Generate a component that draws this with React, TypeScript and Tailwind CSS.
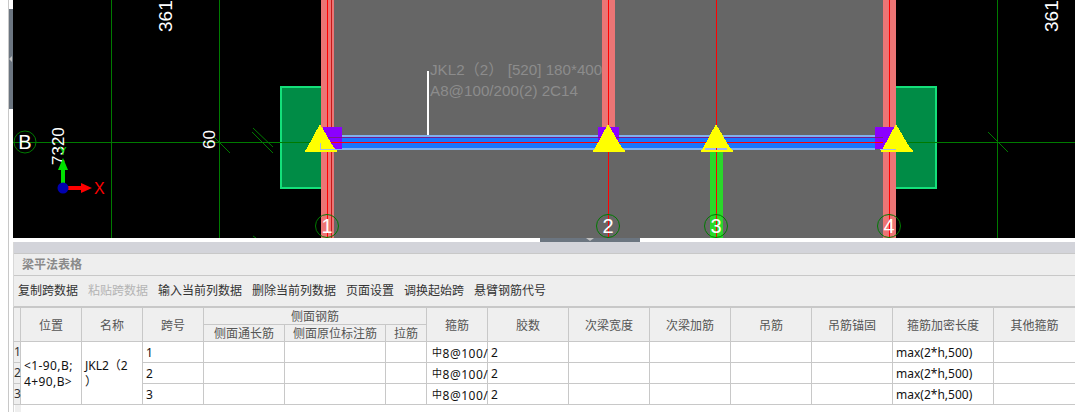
const TOOLBAR = [
  { label: "复制跨数据" },
  { label: "粘贴跨数据", disabled: true },
  { label: "输入当前列数据" },
  { label: "删除当前列数据" },
  { label: "页面设置" },
  { label: "调换起始跨" },
  { label: "悬臂钢筋代号" },
];

const COL_WIDTHS = [7, 61, 61, 61, 81, 101, 41, 61, 81, 81, 81, 81, 81, 101, 82];
const TAIL_HEADERS = ["箍筋", "胶数", "次梁宽度", "次梁加筋", "吊筋", "吊筋锚固", "箍筋加密长度", "其他箍筋"];
const AXES = [
  { x: 327, label: "1" },
  { x: 608, label: "2" },
  { x: 716, label: "3" },
  { x: 889, label: "4" },
];
const TRIANGLES = [320, 608, 716, 896];

const HEAD = "border border-[#c8c8c8] bg-[#efefef] p-0 text-center font-normal leading-[15px] text-[#555]";
const CELL = "border border-[#c8c8c8] bg-white p-0 pl-[3px] pt-[2px] text-left align-middle leading-[16px] text-[#111]";

function Triangle({ x }: { x: number }) {
  return (
    <polygon
      points={`${x},124 ${x + 14},148 ${x + 17},150 ${x + 17},152 ${x - 15},152 ${x - 15},150 ${x - 13},148`}
      fill="#ffff00"
      shapeRendering="crispEdges"
    />
  );
}

function Drawing() {
  const label = "font-['Liberation_Sans','Noto_Sans_CJK_SC',sans-serif] text-[15.2px]";
  return (
    <svg width={1062} height={238} viewBox="13 0 1062 238" className="block bg-black">
      <rect x={334} y={0} width={549} height={238} fill="#666666" />

      {/* column stubs */}
      <rect x={281} y={87} width={42} height={101} fill="#008c46" stroke="#14e07a" strokeWidth={2} />
      <rect x={894} y={87} width={42} height={101} fill="#008c46" stroke="#14e07a" strokeWidth={2} />

      {/* grid */}
      <g stroke="#007a00" strokeWidth={1} shapeRendering="crispEdges">
        <line x1={111.5} y1={0} x2={111.5} y2={238} />
        <line x1={219.5} y1={0} x2={219.5} y2={238} />
        <line x1={997.5} y1={0} x2={997.5} y2={238} />
        <line x1={13} y1={142.5} x2={321} y2={142.5} />
        <line x1={896} y1={142.5} x2={1075} y2={142.5} />
      </g>
      <g stroke="#007a00" strokeWidth={1}>
        <line x1={214} y1={137} x2={230} y2={153} />
        <line x1={253} y1={128} x2={273} y2={147} />
        <line x1={252} y1={132} x2={273} y2={153} />
        <line x1={988} y1={132} x2={1008} y2={152} />
        <line x1={253} y1={236} x2={256} y2={238} />
      </g>

      {/* beams running up/down */}
      <rect x={321} y={0} width={13} height={238} fill="#ec7575" />
      <rect x={602} y={0} width={13} height={127} fill="#ec7575" />
      <rect x={883} y={0} width={13} height={238} fill="#ec7575" />
      <rect x={710} y={150} width={13} height={88} fill="#2ad82a" />
      <g fill="#ff0000" shapeRendering="crispEdges">
        <rect x={327} y={0} width={1} height={238} />
        <rect x={331} y={0} width={1} height={238} fill="#c81818" />
        <rect x={608} y={0} width={1} height={238} />
        <rect x={716} y={0} width={1} height={238} />
        <rect x={889} y={0} width={1} height={238} />
      </g>

      {/* JKL2 */}
      <g shapeRendering="crispEdges">
        <rect x={334} y={135} width={541} height={15} fill="#1a75ff" />
        <rect x={334} y={135} width={541} height={2} fill="#7fb0ee" />
        <rect x={334} y={148} width={541} height={2} fill="#7fb0ee" />
        <rect x={323} y={127} width={19} height={22} fill="#8b00ff" />
        <rect x={598} y={127} width={21} height={22} fill="#8b00ff" />
        <rect x={875} y={127} width={19} height={22} fill="#8b00ff" />
        <rect x={323} y={137} width={560} height={1} fill="#7a1a8a" />
        <rect x={323} y={142} width={560} height={1} fill="#ff0000" />
        <rect x={427} y={71} width={2} height={64} fill="#ffffff" />
      </g>

      {TRIANGLES.map((x) => (
        <Triangle key={x} x={x} />
      ))}
      <g fill="#9fb8e8" shapeRendering="crispEdges">
        <rect x={320} y={143} width={1} height={7} />
        <rect x={320} y={149} width={16} height={1} />
        <rect x={705} y={148} width={22} height={2} />
        <rect x={880} y={149} width={16} height={1} />
      </g>
      <rect x={716} y={148} width={1} height={2} fill="#ff0000" />

      <text x={430} y={75} fill="#8c8c8c" className={label}>
        JKL2（2） [520] 180*400
      </text>
      <text x={430} y={96} fill="#8c8c8c" className={label}>
        A8@100/200(2) 2C14
      </text>

      {/* axis bubbles */}
      <g fill="none" stroke="#007a00" strokeWidth={1}>
        <circle cx={25} cy={142} r={11} />
        {AXES.map((a) => (
          <circle key={a.x} cx={a.x} cy={226} r={11.5} />
        ))}
      </g>
      <g fill="#ffffff" textAnchor="middle" className="font-['Liberation_Sans',sans-serif] text-[20px]">
        <text x={25} y={149}>B</text>
        {AXES.map((a) => (
          <text key={a.x} x={a.x} y={233}>{a.label}</text>
        ))}
      </g>

      {/* dimensions */}
      <g fill="#ffffff" className="font-['Liberation_Sans',sans-serif] text-[17px]">
        <text transform="translate(172 32) rotate(-90)" className="text-[19px]">361</text>
        <text transform="translate(1058 32) rotate(-90)" className="text-[19px]">361</text>
        <text transform="translate(64 165) rotate(-90)">7320</text>
        <text transform="translate(215 149) rotate(-90)">60</text>
      </g>

      {/* ucs */}
      <rect x={61} y={168} width={4} height={16} fill="#00e000" />
      <polygon points="63,158 58,170 68,170" fill="#00e000" />
      <rect x={66} y={186} width={16} height={4} fill="#ff0000" />
      <polygon points="81,183 92,188 81,193" fill="#ff0000" />
      <circle cx={63} cy={188} r={5.5} fill="#0000b0" />
      <text x={63} y={155} fill="#00e000" textAnchor="middle" className="font-['Liberation_Sans',sans-serif] text-[11px]">Y</text>
      <text x={94} y={194} fill="#ff0000" className="font-['Liberation_Sans',sans-serif] text-[16px]">X</text>
    </svg>
  );
}

export default function App() {
  return (
    <div className="flex h-[412px] w-[1075px] overflow-hidden bg-white font-['Noto_Sans','Noto_Sans_CJK_SC',sans-serif] text-[12px]">
      <div className="ml-[8px] w-[5px] border-l border-[#c8c8c8]">
        <div className="mt-[9px] flex h-[100px] items-center bg-[#6b7580]">
          <div className="h-0 w-0 border-y-[3px] border-r-[3px] border-y-transparent border-r-[#c0c0c0]" />
        </div>
      </div>

      <div className="flex w-[1062px] flex-col">
        <Drawing />
        <div className="ml-[527px] flex h-[4px] w-[100px] justify-center bg-[#6b7580]">
          <div className="h-0 w-0 border-x-[4px] border-t-[3px] border-x-transparent border-t-[#c0c0c0]" />
        </div>

        <div className="flex flex-1 flex-col border-l border-[#d8d8d8]">
          <div className="h-[11px] bg-[#d3d4da]" />
          <div className="flex h-[23px] items-center border-y border-[#c8c8c8] bg-[#eeeeee] pl-[8px] font-bold text-[#8a8a8a]">
            梁平法表格
          </div>
          <div className="flex h-[31px] items-center gap-[10px] border-b border-[#c8c8c8] bg-[#eeeeee] pl-[4px] text-[#333]">
            {TOOLBAR.map((item) => (
              <span key={item.label} className={item.disabled ? "text-[#b4b4b4]" : ""}>
                {item.label}
              </span>
            ))}
          </div>

          <table className="-ml-px w-[1062px] table-fixed border-collapse">
            <colgroup>
              {COL_WIDTHS.map((w, i) => (
                <col key={i} style={{ width: w }} />
              ))}
            </colgroup>
            <thead>
              <tr className="h-[17px]">
                <th rowSpan={2} className={HEAD} />
                <th rowSpan={2} className={`${HEAD} pt-[1px]`}>位置</th>
                <th rowSpan={2} className={`${HEAD} pt-[1px]`}>名称</th>
                <th rowSpan={2} className={`${HEAD} pt-[1px]`}>跨号</th>
                <th colSpan={3} className={`${HEAD} pt-[1px]`}>侧面钢筋</th>
                {TAIL_HEADERS.map((h) => (
                  <th key={h} rowSpan={2} className={`${HEAD} pt-[1px]`}>{h}</th>
                ))}
              </tr>
              <tr className="h-[17px]">
                <th className={HEAD}>侧面通长筋</th>
                <th className={HEAD}>侧面原位标注筋</th>
                <th className={HEAD}>拉筋</th>
              </tr>
            </thead>
            <tbody>
              {[1, 2, 3].map((n) => (
                <tr key={n} className="h-[21px]">
                  <td className="border border-[#c8c8c8] bg-[#efefef] p-0 text-center text-[#333]">{n}</td>
                  {n === 1 && (
                    <>
                      <td rowSpan={3} className={`${CELL} tracking-[0.4px]`}>
                        &lt;1-90,B;
                        <br />
                        4+90,B&gt;
                      </td>
                      <td rowSpan={3} className={CELL}>
                        JKL2（2
                        <br />
                        ）
                      </td>
                    </>
                  )}
                  <td className={CELL}>{n}</td>
                  <td className={CELL} />
                  <td className={CELL} />
                  <td className={CELL} />
                  <td className={`${CELL} whitespace-nowrap pt-0 pl-[5px] tracking-[0.5px]`}>
                    <span className="align-[2px] text-[10px]">中</span>8@100/
                  </td>
                  <td className={CELL}>2</td>
                  <td className={CELL} />
                  <td className={CELL} />
                  <td className={CELL} />
                  <td className={CELL} />
                  <td className={CELL}>max(2*h,500)</td>
                  <td className={CELL} />
                </tr>
              ))}
            </tbody>
          </table>
          <div className="ml-[1px] w-[6px] flex-1 bg-[#efefef]" />
        </div>
      </div>
    </div>
  );
}
